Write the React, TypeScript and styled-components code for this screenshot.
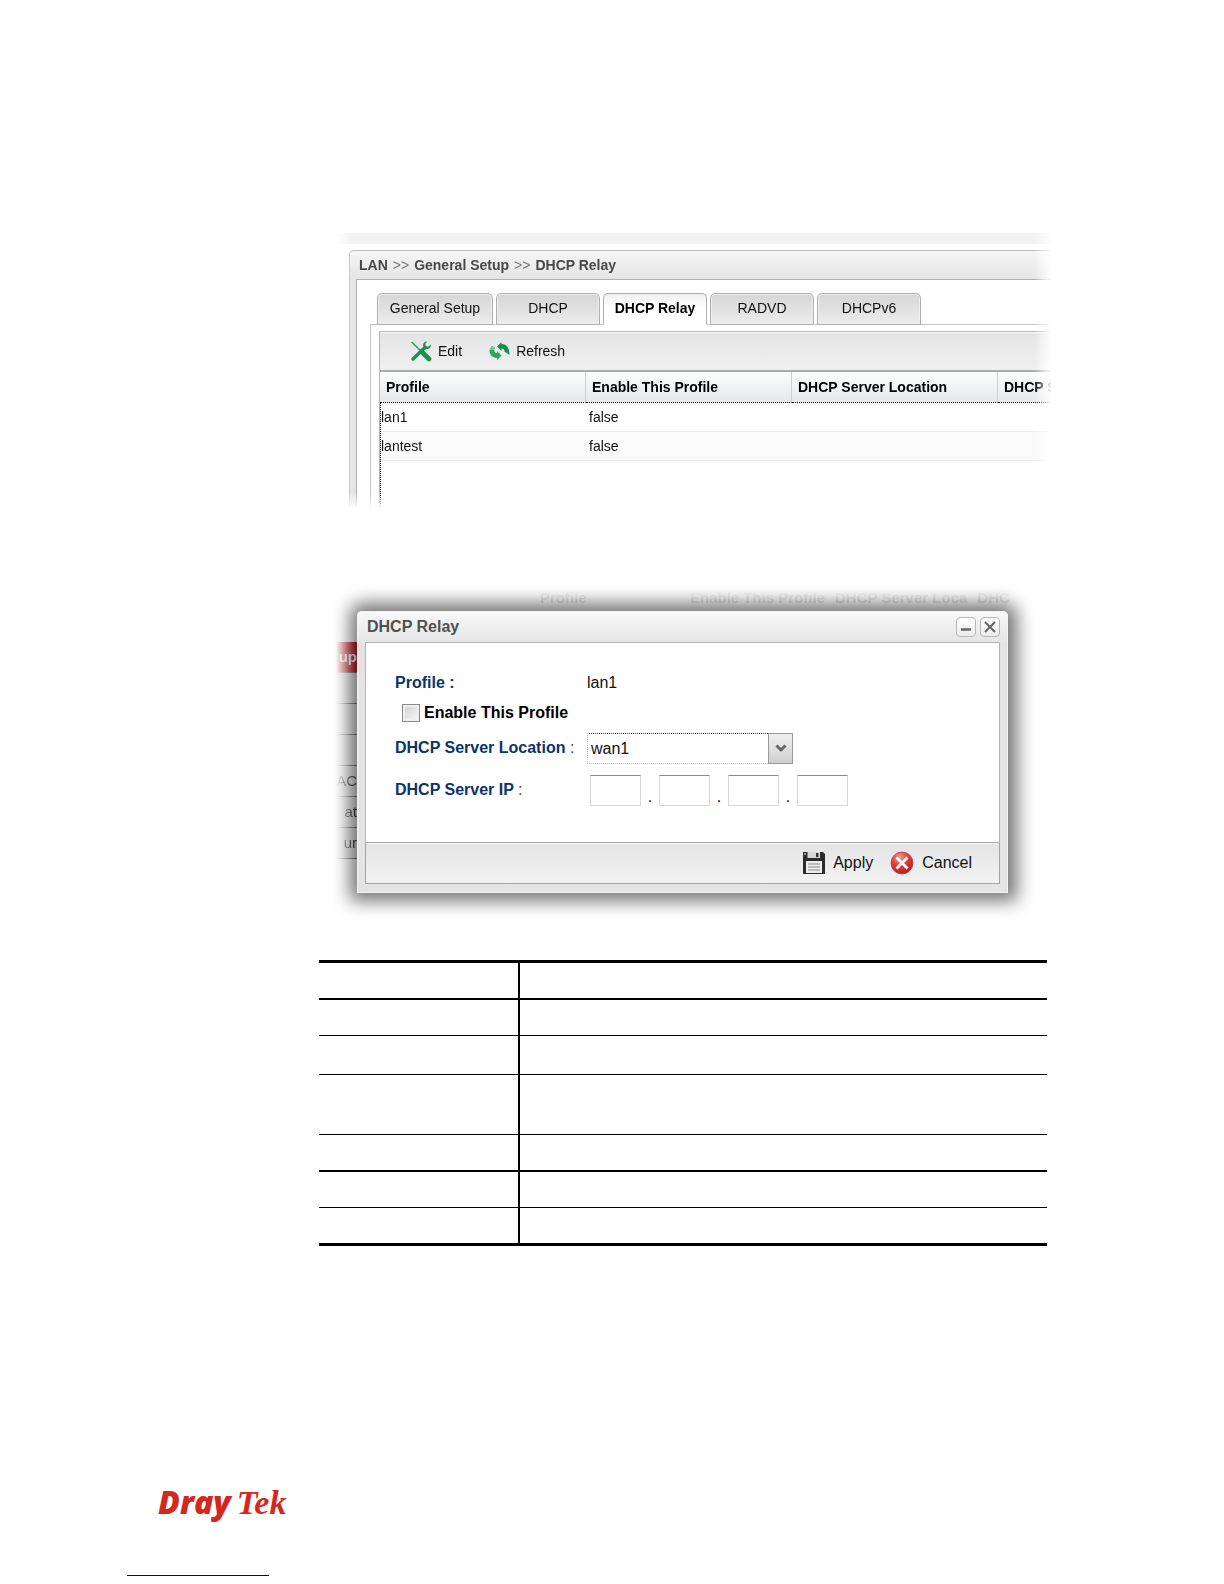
import React from "react";
import styled, { createGlobalStyle, css } from "styled-components";

const sans = `"Liberation Sans", Arial, sans-serif`;

const GlobalStyle = createGlobalStyle`
  *, *::before, *::after { box-sizing: border-box; }
  body { margin: 0; background: #fff; color: #111; font-family: ${sans}; font-size: 14px; }
  button, input, select { font: inherit; color: inherit; margin: 0; }
`;

const Page = styled.div`
  display: flex;
  flex-direction: column;
  padding-top: 233px;
  overflow: hidden;
`;

const Main = styled.main`
  display: flex;
  flex-direction: column;
  padding: 0 168px 0 317px;
`;

/* ---------- LAN general setup screen ---------- */

const SetupScreen = styled.section`
  margin-left: 19px;
  height: 276px;
  overflow: hidden;
  mask-image: linear-gradient(to right, transparent, #000 16px, #000 calc(100% - 22px), transparent calc(100% - 4px)),
    linear-gradient(to top, transparent, #000 16px);
  mask-composite: intersect;
`;

const TopStrip = styled.div`
  height: 11px;
  margin-bottom: 6px;
  background: #f2f2f2;
`;

const Panel = styled.div`
  height: 100%;
  margin-left: 13px;
  border: 1px solid #bdbdbd;
  border-right: 0;
  border-radius: 5px 0 0 0;
  background: linear-gradient(#f6f6f6, #e4e4e4 28px);
`;

const Breadcrumb = styled.h1`
  display: flex;
  align-items: center;
  gap: 5px;
  height: 28px;
  margin: 0;
  padding-left: 9px;
  font-size: 14px;
  line-height: 20px;
  color: #484848;

  i {
    font-style: normal;
    font-weight: 400;
    color: #777;
  }
`;

const PanelBody = styled.div`
  height: 100%;
  margin-left: 6px;
  padding-top: 13px;
  border-top: 1px solid #b0b0b0;
  border-left: 1px solid #b0b0b0;
  background: #fff;
`;

const Tabs = styled.div`
  position: relative;
  display: flex;
  gap: 3px;
  padding-left: 20px;
  margin-bottom: -1px;
`;

const Tab = styled.button<{ $active?: boolean; $wide?: boolean }>`
  width: ${(p) => (p.$wide ? 116 : 104)}px;
  height: 32px;
  padding: 0 0 3px;
  border: 1px solid #aeaeae;
  border-radius: 5px 5px 0 0;
  background: linear-gradient(#d6d6d6, #ececec);
  box-shadow: inset 0 0 0 1px #eee;
  white-space: nowrap;
  ${(p) =>
    p.$active &&
    css`
      background: linear-gradient(#f0f0f0, #fff 14px);
      border-bottom-color: #fff;
      box-shadow: none;
      color: #000;
      font-weight: 700;
    `}
`;

const TabPanel = styled.div`
  height: 100%;
  margin-left: 13px;
  padding: 6px 0 0 8px;
  border-top: 1px solid #c4c4c4;
  border-left: 1px solid #c4c4c4;
`;

const Grid = styled.div`
  height: 100%;
  border-top: 1px solid #b4b4b4;
  border-left: 1px solid #b4b4b4;
`;

const Toolbar = styled.div`
  display: flex;
  align-items: center;
  gap: 27px;
  height: 40px;
  padding-left: 30px;
  border-bottom: 2px solid #acacac;
  background: linear-gradient(#e4e4e4, #f0f0f0);
  box-shadow: inset 0 1px #fafafa;
`;

const ToolButton = styled.button<{ $large?: boolean }>`
  display: flex;
  align-items: center;
  gap: ${(p) => (p.$large ? 8 : 6)}px;
  padding: 0;
  border: 0;
  background: none;
  font-size: ${(p) => (p.$large ? 16 : 14)}px;
`;

const RecordArea = styled.div`
  position: relative;
  height: 140px;

  &::after {
    content: "";
    position: absolute;
    top: 30px;
    bottom: 0;
    left: 0;
    border-left: 1px dotted #000;
  }
`;

const Records = styled.table`
  width: 100%;
  table-layout: fixed;
  border-collapse: separate;
  border-spacing: 0;
  text-align: left;

  th {
    width: 206px;
    height: 31px;
    padding: 0 0 0 6px;
    border-right: 1px solid #cfcfcf;
    border-bottom: 1px dotted #000;
    background: linear-gradient(#fcfdfd, #e6e7e8);
    color: #000;
    font-size: 14px;
    white-space: nowrap;
  }
  th:last-child {
    width: auto;
    border-right: 0;
  }
  td {
    height: 29px;
    padding: 0 0 0 3px;
    border-bottom: 1px solid #ececec;
  }
  td:first-child {
    padding-left: 1px;
  }
  tr:nth-child(even) td {
    background: #fafafa;
  }
`;

/* ---------- DHCP Relay dialog ---------- */

const DialogStage = styled.section`
  position: relative;
  margin: 81px 16px 0 19px;
  padding: 21px 32px 19px 21px;
`;

const Backdrop = styled.div`
  position: absolute;
  inset: 0;
  mask-image: linear-gradient(to right, transparent, #000 20px, #000 calc(100% - 30px), transparent calc(100% - 12px));
`;

const BackdropHeads = styled.div`
  display: flex;
  gap: 10px;
  height: 16px;
  padding-left: 204px;
  color: #d8d8d8;
  font-size: 15px;
  font-weight: 700;
  line-height: 16px;
  white-space: nowrap;
  mask-image: linear-gradient(transparent, #000);

  span:first-child {
    width: 140px;
  }
`;

const BackdropMenu = styled.ul`
  width: 22px;
  margin: 36px 0 0;
  padding: 0;
  list-style: none;
`;

const BackdropItem = styled.li<{ $selected?: boolean }>`
  display: flex;
  justify-content: flex-end;
  height: 31px;
  padding-right: 1px;
  border-bottom: 1px solid #777;
  background: ${(p) => (p.$selected ? "#c8202a" : "#e6e6e6")};
  color: ${(p) => (p.$selected ? "#fff" : "#333")};
  font-size: 15px;
  font-weight: ${(p) => (p.$selected ? 700 : 400)};
  line-height: 30px;
`;

const Dialog = styled.form`
  position: relative;
  padding: 0 7px 8px;
  border: 1px solid #f4f4f4;
  border-radius: 5px 5px 0 0;
  background: linear-gradient(#f8f8f8, #e4e4e4 32px);
  box-shadow: 1px 0 18px 8px rgba(0, 0, 0, 0.55);
`;

const DialogHead = styled.header`
  display: flex;
  align-items: center;
  gap: 4px;
  height: 30px;

  h2 {
    flex: 1;
    margin: 0;
    padding-left: 2px;
    font-size: 16px;
    line-height: 20px;
    color: #505050;
  }
`;

const WindowButton = styled.button`
  display: grid;
  place-items: center;
  width: 20px;
  height: 20px;
  padding: 0;
  border: 1px solid #b8b8b8;
  border-radius: 4px;
  background: linear-gradient(#fff, #ececec);
`;

const DialogBody = styled.div`
  padding: 25px 29px 30px;
  border: 1px solid #b4b4b4;
  border-bottom: 0;
  background: #fff;
  font-size: 16px;
`;

const FieldRow = styled.div<{ $h: number }>`
  display: grid;
  grid-template-columns: 192px 1fr;
  align-items: center;
  height: ${(p) => p.$h}px;
`;

const FieldLabel = styled.label`
  color: #0b3468;
  font-weight: 700;
  white-space: nowrap;

  i {
    color: #444;
    font-style: normal;
    font-weight: 400;
  }
`;

const CheckLabel = styled.label`
  display: flex;
  align-items: center;
  gap: 4px;
  padding-left: 7px;
  color: #000;
  font-weight: 700;
  white-space: nowrap;
`;

const CheckBox = styled.input`
  appearance: none;
  width: 18px;
  height: 18px;
  border: 1px solid #8a8a8a;
  background: linear-gradient(135deg, #cfcfcf, #fafafa);
  box-shadow: inset 0 0 0 2px #efefef;
`;

const SelectBox = styled.div`
  position: relative;
  width: 206px;
  height: 31px;
`;

const Select = styled.select`
  appearance: none;
  width: 181px;
  height: 31px;
  padding: 0 0 0 3px;
  border: 1px dotted #b4bcc4;
  border-top-color: #444;
  border-right: 0;
  border-radius: 0;
  background: #fff;
`;

const SelectArrow = styled.span`
  position: absolute;
  top: 0;
  right: 0;
  display: grid;
  place-items: center;
  width: 25px;
  height: 31px;
  border: 1px solid #999;
  background: linear-gradient(#f0f0f0, #cfcfcf);
  pointer-events: none;
`;

const IpGroup = styled.div`
  display: flex;
  align-items: flex-end;
  padding-left: 3px;
  line-height: 18px;

  span {
    width: 18px;
    text-align: center;
  }
`;

const IpInput = styled.input`
  width: 51px;
  height: 31px;
  padding: 0 4px;
  border: 1px solid #d4d8dc;
  border-top-color: #8c8c8c;
  background: #fff;
`;

const DialogFoot = styled.footer`
  display: flex;
  align-items: center;
  justify-content: flex-end;
  gap: 17px;
  height: 42px;
  padding-right: 27px;
  border: 1px solid #a4a4a4;
  background: linear-gradient(#e4e4e4, #f2f2f2);
  box-shadow: inset 0 1px #f8f8f8;
`;

/* ---------- Description table ---------- */

const Descriptions = styled.table`
  margin: 48px 9px 0 2px;
  border-collapse: collapse;
  border-top: 3px solid #000;
  border-bottom: 3px solid #000;

  td,
  th {
    padding: 0;
  }
  td:first-child,
  th:first-child {
    width: 200px;
    border-right: 2px solid #000;
  }
`;

const DescRow = styled.tr<{ $h: number; $rule?: number }>`
  height: ${(p) => p.$h}px;
  border-bottom: ${(p) => p.$rule ?? 1}px solid #000;
`;

/* ---------- Page footer ---------- */

const PageFoot = styled.footer`
  display: flex;
  flex-direction: column;
  align-items: flex-start;
  padding: 236px 0 8px 127px;
`;

const Logo = styled.div`
  display: flex;
  align-items: baseline;
  gap: 6px;
  padding-left: 31px;
  color: #d4281e;
  line-height: 40px;
  font-style: italic;

  b {
    font-family: "Open Sans", ${sans};
    font-size: 32px;
    font-weight: 800;
  }
  span {
    font-family: "Liberation Serif", "Times New Roman", serif;
    font-size: 34px;
    font-weight: 700;
  }
`;

const FootLink = styled.a`
  width: 142px;
  height: 53px;
  border-bottom: 1px solid #00008b;
`;

const ToolsIcon = () => (
  <svg width="22" height="22" viewBox="0 0 22 22" fill="none" aria-hidden="true">
    <path d="M1.5 2 11 11" stroke="#3a9c5e" strokeWidth="1.6" />
    <path d="M11.5 11.5 19 19" stroke="#14964a" strokeWidth="4.6" strokeLinecap="round" />
    <path d="M3 19 15 7.500" stroke="#14964a" strokeWidth="3.400" strokeLinecap="round" />
    <path d="M17.500 1.500c-3-.4-5 2-4.200 5l2.700 2.500c3 .6 5.300-1.500 5-4.500l-2.800 2.300-2.500-.7-.5-2.300z" fill="#14964a" />
  </svg>
);

const RefreshIcon = () => (
  <svg width="21" height="18" viewBox="0 0 21 18" aria-hidden="true">
    <path d="M8 4.500 12.500 0v2c5.500 0 8 4 8 11l-5-3.500c0-2-1-3-3-3v2.500z" fill="#12904a" />
    <path d="M12.500 13.500 8 18v-2C3 15.800.5 12.500.5 8.500l2-4.500 3.500 1.500c-1.500 3-.5 5.500 2 5.500V9z" fill="#2aa562" />
    <path d="M.5 8 2.500 4l3.500 1.500L4.800 8z" fill="#7cc79a" />
  </svg>
);

const FloppyIcon = () => (
  <svg width="22" height="22" viewBox="0 0 22 22" aria-hidden="true">
    <path d="M0 0h20l2 2v20H0z" fill="#2c2c2c" />
    <path d="M4.500 0h12.500v6H4.500z" fill="#d8d8d8" />
    <path d="M13 1h2.500v4H13z" fill="#333" />
    <path d="M1 1h2v2H1z" fill="#999" />
    <path d="M3 9h16v12H3z" fill="#eee" />
    <path d="M5 12h12M5 15h12M5 18h12" stroke="#aaa" strokeWidth="1.500" />
  </svg>
);

const CancelIcon = () => (
  <svg width="24" height="24" viewBox="0 0 24 24" aria-hidden="true">
    <defs>
      <radialGradient id="cancelRed" cx="40%" cy="25%" r="80%">
        <stop offset="0" stopColor="#f49a94" />
        <stop offset=".5" stopColor="#dc3b38" />
        <stop offset="1" stopColor="#b81820" />
      </radialGradient>
    </defs>
    <circle cx="12" cy="12" r="11" fill="url(#cancelRed)" stroke="#b8484a" strokeWidth=".8" />
    <path d="m6.500 6.500 11 11M17.500 6.500l-11 11" stroke="#fff" strokeWidth="2.800" />
  </svg>
);

const App = () => (
  <>
    <GlobalStyle />
    <Page>
      <Main>
        <SetupScreen>
          <TopStrip />
          <Panel>
            <Breadcrumb>
              <span>LAN</span>
              <i>&gt;&gt;</i>
              <span>General Setup</span>
              <i>&gt;&gt;</i>
              <span>DHCP Relay</span>
            </Breadcrumb>
            <PanelBody>
              <Tabs role="tablist">
                <Tab role="tab" $wide>General Setup</Tab>
                <Tab role="tab">DHCP</Tab>
                <Tab role="tab" aria-selected $active>DHCP Relay</Tab>
                <Tab role="tab">RADVD</Tab>
                <Tab role="tab">DHCPv6</Tab>
              </Tabs>
              <TabPanel>
                <Grid>
                  <Toolbar>
                    <ToolButton type="button"><ToolsIcon />Edit</ToolButton>
                    <ToolButton type="button"><RefreshIcon />Refresh</ToolButton>
                  </Toolbar>
                  <RecordArea>
                    <Records>
                      <thead>
                        <tr>
                          <th>Profile</th>
                          <th>Enable This Profile</th>
                          <th>DHCP Server Location</th>
                          <th>DHCP S</th>
                        </tr>
                      </thead>
                      <tbody>
                        {["lan1", "lantest"].map((name) => (
                          <tr key={name}>
                            <td>{name}</td>
                            <td>false</td>
                            <td />
                            <td />
                          </tr>
                        ))}
                      </tbody>
                    </Records>
                  </RecordArea>
                </Grid>
              </TabPanel>
            </PanelBody>
          </Panel>
        </SetupScreen>

        <DialogStage>
          <Backdrop aria-hidden="true">
            <BackdropHeads>
              <span>Profile</span>
              <span>Enable This Profile</span>
              <span>DHCP Server Loca</span>
              <span>DHC</span>
            </BackdropHeads>
            <BackdropMenu>
              <BackdropItem $selected>up</BackdropItem>
              <BackdropItem />
              <BackdropItem />
              <BackdropItem />
              <BackdropItem>AC</BackdropItem>
              <BackdropItem>at</BackdropItem>
              <BackdropItem>ur</BackdropItem>
            </BackdropMenu>
          </Backdrop>
          <Dialog onSubmit={(e) => e.preventDefault()}>
            <DialogHead>
              <h2>DHCP Relay</h2>
              <WindowButton type="button" aria-label="Minimize">
                <svg width="12" height="12" viewBox="0 0 12 12"><path d="M1 8.500h10" stroke="#666" strokeWidth="2.500" /></svg>
              </WindowButton>
              <WindowButton type="button" aria-label="Close">
                <svg width="12" height="12" viewBox="0 0 12 12"><path d="m1 1 10 10M11 1 1 11" stroke="#666" strokeWidth="2" /></svg>
              </WindowButton>
            </DialogHead>
            <DialogBody>
              <FieldRow $h={30}>
                <FieldLabel as="span">Profile :</FieldLabel>
                <span>lan1</span>
              </FieldRow>
              <FieldRow $h={30}>
                <CheckLabel>
                  <CheckBox type="checkbox" />
                  Enable This Profile
                </CheckLabel>
              </FieldRow>
              <FieldRow $h={40}>
                <FieldLabel htmlFor="location">DHCP Server Location <i>:</i></FieldLabel>
                <SelectBox>
                  <Select id="location" defaultValue="wan1">
                    <option>wan1</option>
                  </Select>
                  <SelectArrow>
                    <svg width="12" height="9" viewBox="0 0 12 9" fill="none"><path d="m1.500 1.500 4.500 4.500 4.500-4.500" stroke="#666" strokeWidth="3" /></svg>
                  </SelectArrow>
                </SelectBox>
              </FieldRow>
              <FieldRow $h={44}>
                <FieldLabel htmlFor="ip1">DHCP Server IP <i>:</i></FieldLabel>
                <IpGroup>
                  <IpInput id="ip1" />
                  <span>.</span>
                  <IpInput aria-label="DHCP Server IP, part 2" />
                  <span>.</span>
                  <IpInput aria-label="DHCP Server IP, part 3" />
                  <span>.</span>
                  <IpInput aria-label="DHCP Server IP, part 4" />
                </IpGroup>
              </FieldRow>
            </DialogBody>
            <DialogFoot>
              <ToolButton $large type="submit"><FloppyIcon />Apply</ToolButton>
              <ToolButton $large type="button"><CancelIcon />Cancel</ToolButton>
            </DialogFoot>
          </Dialog>
        </DialogStage>

        <Descriptions>
          <thead>
            <DescRow $h={37} $rule={2}><th /><th /></DescRow>
          </thead>
          <tbody>
            <DescRow $h={37}><td /><td /></DescRow>
            <DescRow $h={39}><td /><td /></DescRow>
            <DescRow $h={60}><td /><td /></DescRow>
            <DescRow $h={36} $rule={2}><td /><td /></DescRow>
            <DescRow $h={37}><td /><td /></DescRow>
            <DescRow $h={37} $rule={3}><td /><td /></DescRow>
          </tbody>
        </Descriptions>
      </Main>

      <PageFoot>
        <Logo><b>Dray</b><span>Tek</span></Logo>
        <FootLink href="#top" aria-label="DrayTek" />
      </PageFoot>
    </Page>
  </>
);

export default App;
